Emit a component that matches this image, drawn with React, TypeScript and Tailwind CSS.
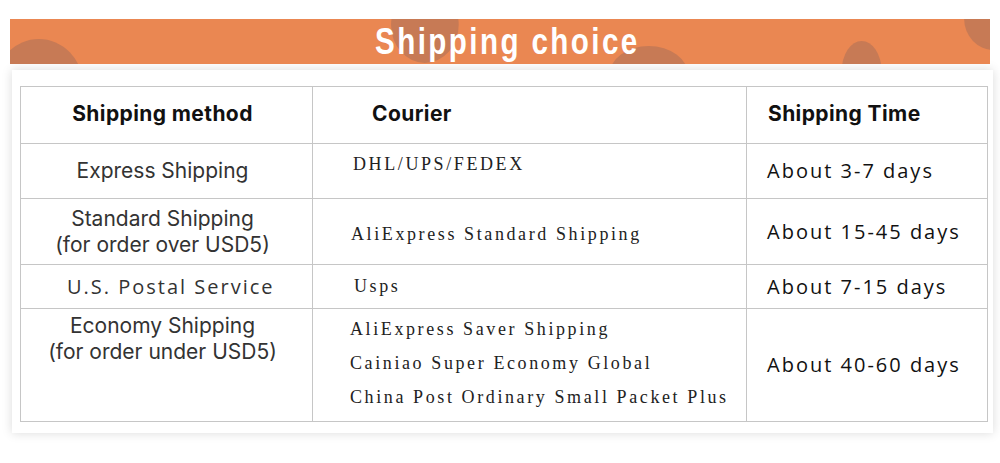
import React from 'react';

const sans = "font-['Inter','Noto_Sans',sans-serif]";
const serif = "font-['Liberation_Serif','DejaVu_Serif',serif]";
const open = "font-['Open_Sans','Noto_Sans',sans-serif]";

// decorative blobs behind the title
const Blobs: React.FC = () => (
  <svg className="absolute inset-0 h-full w-full" viewBox="0 0 985 45" preserveAspectRatio="none">
    <g fill="#c77a55">
      <ellipse cx="29" cy="65" rx="44" ry="45" />
      <ellipse cx="417" cy="6" rx="34" ry="38" />
      <ellipse cx="642" cy="57" rx="40" ry="30" />
      <ellipse cx="856" cy="52" rx="20" ry="30" />
      <ellipse cx="989" cy="0" rx="30" ry="31" />
    </g>
  </svg>
);

const Banner: React.FC = () => (
  <div className="relative mx-[10px] mt-[19px] h-[45px] overflow-hidden bg-[#ea8752]">
    <Blobs />
    <div className="relative flex h-full items-center justify-center pl-[14px]">
      <h1 className="scale-x-[0.8] font-['Liberation_Sans','Arial',sans-serif] text-[37px] font-bold leading-none tracking-[3px] text-white">
        Shipping choice
      </h1>
    </div>
  </div>
);

const cell = 'border border-[#c6c6c6]';
const head = `${cell} ${sans} align-middle text-[21px] font-bold tracking-[0.4px] text-[#111]`;
const method = `${cell} ${sans} pr-[8px] text-center text-[21px] leading-[26px] text-[#333]`;
const courier = `${cell} ${serif} text-[18px] tracking-[2.6px] text-[#222]`;
const time = `${cell} ${open} pl-[20px] align-middle text-[20px] font-medium tracking-[2px] text-[#111]`;

const App: React.FC = () => {
  return (
    <div className="h-[463px] w-[1000px] overflow-hidden bg-white">
      <Banner />
      <div className="ml-[12px] mt-[6px] h-[363px] w-[981px] bg-white pl-[8px] pt-[16px] shadow-[0_0_10px_rgba(0,0,0,0.15)]">
        <table className="w-[967px] table-fixed border-collapse">
          <colgroup>
            <col className="w-[292px]" />
            <col className="w-[434px]" />
            <col className="w-[241px]" />
          </colgroup>
          <tbody>
            <tr className="h-[57px]">
              <td className={`${head} pr-[8px] pb-[3px] text-center`}>Shipping method</td>
              <td className={`${head} pl-[59px] pb-[3px]`}>Courier</td>
              <td className={`${head} pl-[21px] pb-[3px]`}>Shipping Time</td>
            </tr>
            <tr className="h-[55px]">
              <td className={`${method} align-middle`}>Express Shipping</td>
              <td className={`${courier} pl-[40px] pt-[8px] align-top leading-[24px]`}>DHL/UPS/FEDEX</td>
              <td className={time}>About 3-7 days</td>
            </tr>
            <tr className="h-[66px]">
              <td className={`${method} align-middle`}>
                Standard Shipping
                <br />
                (for order over USD5)
              </td>
              <td className={`${courier} pl-[38px] pt-[6px] align-middle`}>AliExpress Standard Shipping</td>
              <td className={time}>About 15-45 days</td>
            </tr>
            <tr className="h-[44px]">
              <td className={`${cell} ${open} pl-[46px] align-middle text-[20px] tracking-[2px] text-[#333]`}>U.S. Postal Service</td>
              <td className={`${courier} pl-[41px] align-middle`}>Usps</td>
              <td className={time}>About 7-15 days</td>
            </tr>
            <tr className="h-[113px]">
              <td className={`${method} pt-[4px] align-top`}>
                Economy Shipping
                <br />
                (for order under USD5)
              </td>
              <td className={`${courier} pl-[37px] pt-[3px] align-top leading-[34px]`}>
                <div>AliExpress Saver Shipping</div>
                <div>Cainiao Super Economy Global</div>
                <div>China Post Ordinary Small Packet Plus</div>
              </td>
              <td className={time}>About 40-60 days</td>
            </tr>
          </tbody>
        </table>
      </div>
    </div>
  );
};

export default App;
